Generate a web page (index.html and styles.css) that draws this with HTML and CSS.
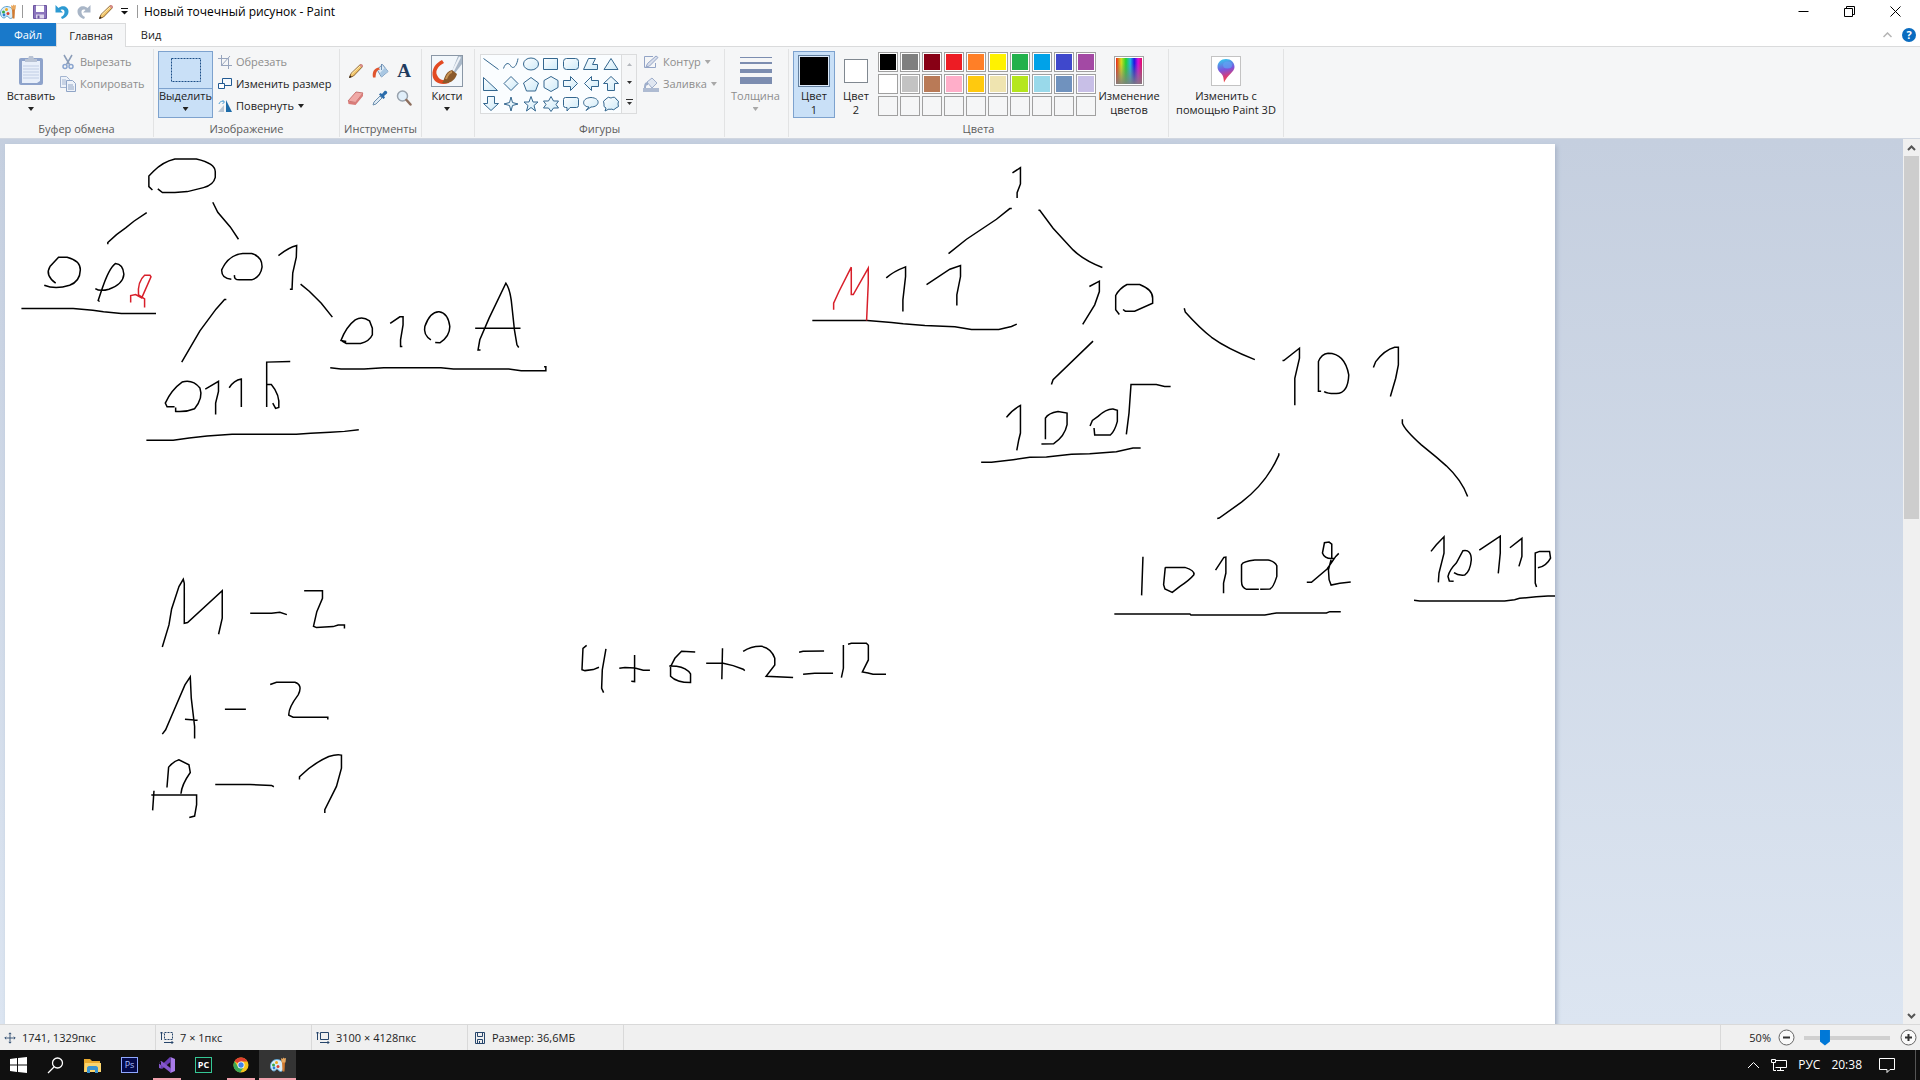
FILE: index.html
```html
<!DOCTYPE html>
<html lang="ru">
<head>
    <meta charset="UTF-8">
    <meta name="viewport" content="width=device-width, initial-scale=1.0">
    <title>Новый точечный рисунок - Paint</title>
    <link rel="stylesheet" href="styles.css">
</head>

<body>
    <svg class="defs" aria-hidden="true">
        <defs>
            <linearGradient id="shapeFill" x1="0" y1="0" x2="1" y2="1">
                <stop offset="0" stop-color="#ffffff"/>
                <stop offset="1" stop-color="#cdeaf8"/>
            </linearGradient>
            <linearGradient id="rainbow">
                <stop offset="0" stop-color="#e8261c"/>
                <stop offset=".2" stop-color="#d8dc20"/>
                <stop offset=".38" stop-color="#25d030"/>
                <stop offset=".55" stop-color="#20b8e0"/>
                <stop offset=".7" stop-color="#1818e0"/>
                <stop offset=".85" stop-color="#d810d8"/>
                <stop offset="1" stop-color="#e01060"/>
            </linearGradient>
            <linearGradient id="fadeGrey" x1="0" y1="0" x2="0" y2="1">
                <stop offset=".2" stop-color="#808080" stop-opacity="0"/>
                <stop offset="1" stop-color="#808080" stop-opacity=".9"/>
            </linearGradient>
            <linearGradient id="drop" x1=".3" y1="0" x2=".5" y2="1">
                <stop offset="0" stop-color="#35c8ee"/>
                <stop offset=".45" stop-color="#7a55dd"/>
                <stop offset=".75" stop-color="#d83c78"/>
                <stop offset="1" stop-color="#f0503c"/>
            </linearGradient>
            <symbol id="palette" viewBox="0 0 16 16">
                <path d="M7 2.500C3 2.500.5 5.500.5 9c0 3 1.500 5 3.500 5 2 0 1.500-2 3-2s1.500 2.500 3.500 2.500 3-2 3-5c0-4-2.500-7-6.500-7z" fill="#d9edf9" stroke="#5fa3cf"/>
                <circle cx="3.500" cy="8" r="1.500" fill="#39a845"/>
                <circle cx="6.500" cy="5.500" r="1.500" fill="#f0a81c"/>
                <circle cx="4" cy="11" r="1.400" fill="#2a7fd4"/>
                <circle cx="8" cy="9.500" r="1.500" fill="#d8432e"/>
                <path d="M12 5h3l-.5 9.500h-2z" fill="#d07a30"/>
                <path d="M11 1l1.500 1L13.500.5l1 1L16 1l-.5 4.500h-4z" fill="#e8a860"/>
            </symbol>
            <symbol id="pencil" viewBox="0 0 16 16">
                <path d="M1.500 14.500L3 10.500 12 1.800c1-.8 3 1 2.200 2.200L5.500 13z" fill="#f3c66b" stroke="#8a6230"/>
                <path d="M3.500 11l9-8.500" stroke="#fff0b8"/>
                <path d="M1 15l1-2.800 1.800 1.700z" fill="#33261c"/>
                <path d="M11.500 2.400L12.600 1.200c1-.6 2.800 1 2.200 2.200l-1.200 1.200z" fill="#d98d8d"/>
            </symbol>
            <symbol id="bucket" viewBox="0 0 17 17">
                <path d="M5 6.500L10.500 1.500 16 8.500 9.500 14z" fill="#dceaf5" stroke="#6d8fb3"/>
                <path d="M8 10l5-5.500 3 4L9.500 14z" fill="#a9c7e2"/>
                <path d="M9.500 1v6" stroke="#6d8fb3" fill="none"/>
                <path d="M1 14.500C0 9 2 5.500 6.500 4.500L8 6.500C4.500 7 4 10 3.500 14.500z" fill="#e0552f"/>
            </symbol>
        </defs>
    </svg>

    <header class="titlebar">
        <svg class="app-icon" width="16" height="16"><use href="#palette"/></svg>
        <span class="bar"></span>
        <button class="quick" aria-label="Сохранить">
            <svg width="16" height="16" viewBox="0 0 16 16"><path d="M1.500 1.500h13v13h-13z" fill="#8b75bd" stroke="#6c549f"/><path d="M4 1.500h8V8H4z" fill="#fff"/><path d="M4 10.500h8v4H4z" fill="#dcd6ec"/><path d="M5.500 11.500h2v3h-2z" fill="#6c549f"/></svg>
        </button>
        <button class="quick" aria-label="Отменить">
            <svg width="16" height="16" viewBox="0 0 16 16"><path d="M1.500 1v7.500H9L6.500 6C9 5 10.800 6 10.500 8.500 10.300 10.500 9 12 7 13l1 2c4-1.500 6.500-4 6.500-7.500 0-5-6-7-10-3.500z" fill="#2d9ad2"/></svg>
        </button>
        <button class="quick" aria-label="Повторить">
            <svg width="16" height="16" viewBox="0 0 16 16"><path d="M14.500 1v7.500H7L9.500 6C7 5 5.200 6 5.500 8.500 5.700 10.500 7 12 9 13l-1 2C4 13.500 1.500 11 1.500 7.500c0-5 6-7 10-3.500z" fill="#a9b6c7"/></svg>
        </button>
        <button class="quick" aria-label="Карандаш">
            <svg width="16" height="16"><use href="#pencil"/></svg>
        </button>
        <button class="quick more" aria-label="Настройка панели быстрого доступа">
            <svg width="7" height="7" viewBox="0 0 7 7"><path d="M0 .5h7" stroke="#111"/><path d="M0 3h7L3.500 6.500z" fill="#111"/></svg>
        </button>
        <span class="bar"></span>
        <h1 class="title">Новый точечный рисунок - Paint</h1>
        <div class="window-buttons">
            <button aria-label="Свернуть"><svg width="11" height="11" viewBox="0 0 11 11"><path d="M.5 5.500h10"/></svg></button>
            <button aria-label="Свернуть в окно"><svg width="11" height="11" viewBox="0 0 11 11"><path d="M.5 2.500h8v8h-8zM2.500 2.500v-2h8v8h-2"/></svg></button>
            <button aria-label="Закрыть"><svg width="11" height="11" viewBox="0 0 11 11"><path d="M.5.5l10 10M10.500.5l-10 10"/></svg></button>
        </div>
    </header>

    <nav class="tabs">
        <button class="tab file">Файл</button>
        <button class="tab current">Главная</button>
        <button class="tab">Вид</button>
        <button class="collapse" aria-label="Свернуть ленту"><svg width="9" height="6" viewBox="0 0 9 6"><path d="M.5 5l4-4 4 4" fill="none" stroke="#b4b4b4" stroke-width="1.500"/></svg></button>
        <button class="help" aria-label="Справка">?</button>
    </nav>

    <section class="ribbon">
        <div class="group clipboard">
            <div class="tools">
                <button class="big paste">
                    <span class="pic"><svg width="26" height="30" viewBox="0 0 26 30"><rect x="1" y="2" width="24" height="27" rx="2" fill="#8ea3cb"/><path d="M4 5h18v20l-3 2H4z" fill="#e8effa"/><path d="M5 10h16M5 13h16M5 16h16M5 19h16M5 22h16" stroke="#c0cde4"/><path d="M7 3h3l1-3h4l1 3h3v3H7z" fill="#b9c3d4"/></svg></span>
                    Вставить<i class="arrow"></i>
                </button>
                <div class="rows">
                    <button class="row off"><svg width="16" height="16" viewBox="0 0 16 16"><path d="M4 1l5.500 9.500M12 1L6.500 10.500" stroke="#8b9db8" stroke-width="1.500"/><circle cx="5" cy="12.500" r="2" fill="none" stroke="#8aa5cf" stroke-width="1.500"/><circle cx="11" cy="12.500" r="2" fill="none" stroke="#8aa5cf" stroke-width="1.500"/></svg>Вырезать</button>
                    <button class="row off"><svg width="16" height="16" viewBox="0 0 16 16"><path d="M.5.500h6l3 3v8h-9z" fill="#edf2f9" stroke="#a3b4d0"/><path d="M2 4h4M2 6h5M2 8h5" stroke="#a3b4d0"/><path d="M6.500 4.500h6l3 3v8h-9z" fill="#edf2f9" stroke="#8fa4c6"/><path d="M8 9h5M8 11h6M8 13h6" stroke="#8fa4c6"/></svg>Копировать</button>
                </div>
            </div>
            <h2>Буфер обмена</h2>
        </div>

        <div class="group image">
            <div class="tools">
                <button class="big select on">
                    <span class="pic"><svg width="32" height="26" viewBox="0 0 32 26"><rect x="1.500" y="1.500" width="29" height="23" fill="none" stroke="#1c4f87" stroke-dasharray="2 1"/></svg></span>
                    Выделить<i class="arrow"></i>
                </button>
                <div class="rows">
                    <button class="row off"><svg width="14" height="14" viewBox="0 0 14 14"><path d="M3.500 0v10.500H14M0 3.500h10.500V14M3 11l9-10" fill="none" stroke="#98a5bd"/></svg>Обрезать</button>
                    <button class="row"><svg width="14" height="14" viewBox="0 0 14 14"><path d="M4.500 1.500h9v7h-9z" fill="#f5f9fd" stroke="#225a92"/><path d="M.5 6.500h6v5h-6z" fill="#fff" stroke="#225a92"/></svg>Изменить размер</button>
                    <button class="row"><svg width="14" height="14" viewBox="0 0 14 14"><path d="M0 13L6 6v7z" fill="#b9c6d4"/><path d="M8 1l6 12H8z" fill="#1e6ca9"/><path d="M1 5c1-3 3-3 5-2M4.500 1L6.500 3l-2 2" fill="none" stroke="#4d9ed4"/></svg>Повернуть<i class="arrow"></i></button>
                </div>
            </div>
            <h2>Изображение</h2>
        </div>

        <div class="group instruments">
            <div class="tools tool-grid">
                <button aria-label="Карандаш"><svg width="16" height="16"><use href="#pencil"/></svg></button>
                <button aria-label="Заливка цветом"><svg width="17" height="17"><use href="#bucket"/></svg></button>
                <button class="letter">A</button>
                <button aria-label="Ластик"><svg width="18" height="16" viewBox="0 0 18 16"><path d="M1 11L9 2l7 1-7.500 9.500z" fill="#f0a9a6" stroke="#c77573"/><path d="M1 11l7.500 1.500v2.500L1.500 14zM8.500 12.500L16 3v3l-7.500 9z" fill="#d97b78"/></svg></button>
                <button aria-label="Палитра"><svg width="16" height="16" viewBox="0 0 16 16"><path d="M1 15l1-3 6-6 2 2-6 6z" fill="#dfeaf4" stroke="#6c8fae"/><path d="M7 4.500L8.500 3l1.500 1 2.500-3c1.500-1 3.500 1 2.500 2.500l-3 2.500 1 1.500L11.500 9z" fill="#2b6cab"/></svg></button>
                <button aria-label="Масштаб"><svg width="16" height="16" viewBox="0 0 16 16"><circle cx="6.500" cy="6" r="5" fill="#e1effa" stroke="#98a2ad" stroke-width="1.500"/><path d="M10.500 10l4 4.500" stroke="#8d6e5d" stroke-width="2.500" stroke-linecap="round"/></svg></button>
            </div>
            <h2>Инструменты</h2>
        </div>

        <div class="group brushes">
            <div class="tools">
                <button class="big">
                    <span class="pic"><svg width="32" height="32" viewBox="0 0 32 32"><rect x=".5" y=".5" width="31" height="31" fill="#f2f7fb" stroke="#8a97a6"/><path d="M11 5l2 3C7 11 4 16 6 20c2 5 7 6 12 5v3C9 31 2 27 1.500 20 1 13 5 8 11 5z" fill="#e24a22"/><path d="M21 16L27 1h4v8l-7 9z" fill="#a9b8c8"/><path d="M22 16l7-14" stroke="#eef3f8" stroke-width="2"/><path d="M21 15l5 4c-2 6-6 10-15 9 3-3 2-11 10-13z" fill="#8a5a2c"/><path d="M15 24c2-5 4-7 6-7" stroke="#c79455" stroke-width="2" fill="none"/></svg></span>
                    Кисти<i class="arrow"></i>
                </button>
            </div>
        </div>

        <div class="group shapes">
            <div class="tools">
                <div class="gallery">
                    <div class="shape-grid" id="shapeGrid"></div>
                    <div class="gallery-scroll">
                        <button aria-label="Вверх"><svg width="5" height="3"><path d="M0 3h5L2.500 0z" fill="#b4b8bd"/></svg></button>
                        <button aria-label="Вниз"><svg width="5" height="3"><path d="M0 0h5L2.500 3z" fill="#333"/></svg></button>
                        <button aria-label="Дополнительно"><svg width="7" height="6" viewBox="0 0 7 6"><path d="M0 .5h7" stroke="#333"/><path d="M1 3h5L3.500 6z" fill="#333"/></svg></button>
                    </div>
                </div>
                <div class="rows">
                    <button class="row off"><svg width="16" height="14" viewBox="0 0 16 14"><path d="M10 1.500H1.500v11h11V8" fill="none" stroke="#93a4c6"/><path d="M3 12l1.500-3.500L13 1l2 1.500L6.500 11z" fill="#d8deeb" stroke="#93a4c6"/></svg>Контур<i class="arrow"></i></button>
                    <button class="row off"><svg width="16" height="15" viewBox="0 0 16 15"><path d="M4 5l5-4 5 5-5 5z" fill="#dfe6f1" stroke="#9eaecb"/><path d="M1 11c0-4 1-6 4-6v3c-2 0-2 1-2 3z" fill="#9eaecb"/><path d="M0 11h16v4H0z" fill="#aebbd2"/></svg>Заливка<i class="arrow"></i></button>
                </div>
            </div>
            <h2>Фигуры</h2>
        </div>

        <div class="group thickness">
            <div class="tools">
                <button class="big off">
                    <span class="pic"><svg width="32" height="28" viewBox="0 0 32 28"><path d="M0 0h32v1H0zM0 5h32v2H0zM0 12h32v4H0zM0 20h32v7H0z" fill="#7c8db0"/></svg></span>
                    Толщина<i class="arrow"></i>
                </button>
            </div>
        </div>

        <div class="group colors">
            <div class="tools">
                <button class="big color on"><span class="pic"><span class="well first"></span></span>Цвет<br>1</button>
                <button class="big color"><span class="pic"><span class="well"></span></span>Цвет<br>2</button>
                <div class="swatches" id="swatches"></div>
                <button class="big edit-colors">
                    <span class="pic"><svg width="30" height="30" viewBox="0 0 30 30"><rect x=".5" y=".5" width="29" height="29" fill="#fff" stroke="#a5a5a5"/><rect x="2" y="2" width="26" height="26" fill="url(#rainbow)"/><rect x="2" y="2" width="26" height="26" fill="url(#fadeGrey)"/></svg></span>
                    Изменение<br>цветов
                </button>
            </div>
            <h2>Цвета</h2>
        </div>

        <div class="group paint3d">
            <div class="tools">
                <button class="big">
                    <span class="pic"><svg width="30" height="30" viewBox="0 0 30 30"><rect x=".5" y=".5" width="29" height="29" fill="#fff" stroke="#c3c3c3"/><path d="M15 3c5 0 8.500 3.500 8.500 8 0 5-7 8-10.500 15.500-.5-4-.5-6-2-8C9 16 6.500 14.500 6.500 11 6.500 6.500 10 3 15 3z" fill="url(#drop)"/><ellipse cx="16.500" cy="9" rx="4.500" ry="3.500" fill="#5fa4f4" opacity=".7"/></svg></span>
                    Изменить с<br>помощью Paint 3D
                </button>
            </div>
        </div>
    </section>

    <main class="workspace">
        <div class="scroll-area">
            <!-- picture 3100 x 4128 shown at 50% -->
            <svg class="picture" width="1550" height="2064" viewBox="5 144 1550 2064">
                <!-- tree of codes that start with 0 -->
                <g class="ink" transform="translate(0 140) scale(.357 .333)">
                    <path d="M427 150L417 140V108L430 94Q455 66 490 57H550Q603 70 603 95V112Q598 135 570 143L525 155L490 158H455L442 147"/>
                    <path d="M411 218L375 244 352 264Q325 283 302 308V313M596 187L610 217 645 261 668 298"/>
                    <path d="M156 430Q125 405 140 380L164 352H188Q225 362 225 390 224 425 195 436 155 450 124 436"/>
                    <path d="M267 446Q280 456 305 448 345 433 347 403 345 373 323 371 305 385 285 450L275 482 279 485"/>
                    <path d="M60 506H205L260 511 290 516 340 521H437"/>
                    <path d="M648 418Q620 416 621 390 640 345 680 341H705Q735 350 734 382 730 412 705 420H670Q655 420 657 406"/>
                    <path d="M780 347Q810 322 831 317L830 352 820 400 818 448H812"/>
                    <path d="M634 479H629L605 508 560 573 509 667M842 433L867 455 900 490 931 532"/>
                    <path d="M970 605L955 602Q970 560 995 540 1015 528 1035 543L1043 565V585Q1035 605 1010 611H970L957 603"/>
                    <path d="M1093 551L1120 531H1129V555L1122 600V620H1127"/>
                    <path d="M1207 600Q1185 585 1190 560 1205 515 1230 516 1255 520 1260 560 1260 590 1232 609L1219 608"/>
                    <path d="M1346 631H1339L1344 600 1370 535 1417 430Q1430 450 1434 500L1441 570 1448 615 1453 623M1331 565H1458"/>
                    <path d="M925 684L955 688H1020L1075 684H1235L1270 688H1425L1460 693H1529V681H1524"/>
                    <path d="M489 801H468L463 790Q480 750 510 727 540 718 560 745 570 775 545 807 520 818 492 815V803"/>
                    <path d="M575 748L612 725V755L604 790V824M642 744Q655 722 676 718V802"/>
                    <path d="M747 802V667L813 665M747 734H760Q785 765 781 803L772 806 764 790"/>
                    <path d="M410 902H485L530 895 580 889 650 884H830L870 881 925 878 965 875 1005 870"/>
                </g>
                <g class="ink red" transform="translate(0 140) scale(.357 .333)">
                    <path d="M366 488V467L380 464 397 474 423 411 420 406H405Q385 425 388 465L405 477V503"/>
                </g>
                <!-- tree of codes that start with 1 -->
                <g class="ink" transform="translate(800 140) scale(.333)">
                    <path d="M638 99L662 83V132L652 158V174M636 206H630L590 238 500 298 446 341M716 211H720L760 265 820 330Q850 360 908 383"/>
                    <path d="M259 414Q280 395 317 381V410L309 480V515M380 434L450 388 482 377V410L471 465V497"/>
                    <path d="M37 542H202L275 548 310 552 375 557 465 561 515 569H597L635 560 651 553"/>
                    <path d="M869 440L899 424V455L885 495 849 554M959 524L948 510V467Q960 445 982 434H1020Q1060 450 1059 475V490L1005 514H977L970 509"/>
                    <path d="M880 604L760 720 755 734M620 833Q635 812 662 797V880L657 900 651 932"/>
                    <path d="M737 899V835Q745 820 775 815L802 820V855Q795 890 762 912L725 913"/>
                    <path d="M871 859L878 842 895 830Q920 807 940 808L953 812V845Q945 875 932 886H885L883 865"/>
                    <path d="M980 884L988 820 994 734H1070L1095 740H1113"/>
                    <path d="M544 968H575L640 960 690 953 740 952 815 944 870 942 950 936 1000 925H1023"/>
                </g>
                <g class="ink red" transform="translate(800 140) scale(.333)">
                    <path d="M101 510V490L117 455 154 382V464H160L205 385V430L200 542"/>
                </g>
                <g class="ink" transform="translate(1100 280) scale(.333)">
                    <path d="M253 85L256 96Q300 145 335 172 380 205 465 239"/>
                    <path d="M548 242H552L599 205V235L585 295V376M664 334H656V245Q665 222 685 220 735 220 747 285 745 340 710 341 685 342 673 335"/>
                    <path d="M821 263L828 245Q855 210 885 202H896V255L888 295 872 350"/>
                    <path d="M537 520V526Q500 610 425 667L358 715 352 716M908 418V430Q915 450 965 495L1010 532 1040 558Q1085 600 1104 650"/>
                    <path d="M129 831L125 947M196 863H255Q285 872 282 885 270 900 240 920L217 938 195 928 191 915 196 863"/>
                    <path d="M347 871L372 833 378 832V880L371 910V941M477 929H440Q425 925 425 905V855Q430 845 465 841H505Q525 845 531 858V890Q520 925 510 928L481 929"/>
                    <path d="M696 838V793L688 787 674 789 668 820Q675 840 704 836M717 821L708 830 682 868 635 908H621M694 840L686 870 688 900 694 916 720 911 753 907"/>
                    <path d="M43 1003H270L273 1006H495L530 1000H680L690 996H723"/>
                    <path d="M994 815L1010 795 1033 771V820L1018 880 1016 908M1062 905L1049 904 1045 890Q1050 870 1070 850L1090 813Q1115 808 1115 840 1112 875 1095 886 1075 888 1063 879"/>
                    <path d="M1139 811L1202 769V820L1196 881M1231 804L1267 776V830L1258 860"/>
                    <path d="M1311 922L1307 910V820L1320 815H1350L1353 835Q1340 860 1315 864"/>
                    <path d="M943 962L960 964H1215L1245 960 1260 956 1310 951 1345 949H1375"/>
                </g>
                <!-- letter counts -->
                <g class="ink" transform="translate(130 560) scale(.333)">
                    <path d="M97 261L117 195 125 147 147 80 160 58 163 70V190L173 188 277 92V175L266 223M361 160H425L450 157 471 164"/>
                    <path d="M523 92H578V115L561 155 551 199 560 203 610 200 625 195H644V206"/>
                    <path d="M97 523L107 510 127 463 165 375 181 351 184 415 194 500V536M165 478L203 481M285 448H348M421 374L440 367H495Q520 375 505 405 475 445 477 466L490 472H594V479"/>
                    <path d="M111 683L116 622Q130 605 147 600L177 615 181 638Q155 675 153 702M68 752L72 693M64 706H200V735L194 769 178 773"/>
                    <path d="M256 674H360L425 677 432 681M509 659V651Q550 610 597 590 620 583 635 586V625L620 680 585 750V760"/>
                </g>
                <!-- the sum -->
                <g class="ink" transform="translate(560 620) scale(.333)">
                    <path d="M80 76L69 85 66 149 75 152 100 149 117 142M138 87L127 150 125 205 131 218M178 145L195 143 225 144 250 151H270M224 105V185L214 184"/>
                    <path d="M406 96L365 94 345 115 332 140V169Q350 188 392 188V162Q380 143 350 139L328 138M439 130H490L520 137 550 148 555 152M488 85L486 178"/>
                    <path d="M550 94Q575 78 605 79 635 85 645 115V135L619 169 700 173M718 97L730 94 793 93M730 163L765 160H820M851 75V145L845 173M865 73L875 70H920L926 76V120L908 156 925 159 940 163H979"/>
                </g>
            </svg>
        </div>
        <div class="scrollbar">
            <button aria-label="Прокрутить вверх"><svg width="9" height="6" viewBox="0 0 9 6"><path d="M1 5l3.500-3.500L8 5"/></svg></button>
            <div class="thumb"></div>
            <button aria-label="Прокрутить вниз"><svg width="9" height="6" viewBox="0 0 9 6"><path d="M1 1l3.500 3.500L8 1"/></svg></button>
        </div>
    </main>

    <footer class="status">
        <span class="cell"><svg width="12" height="14" viewBox="0 0 14 14"><path d="M7 1v12M1 7h12M5.500 2.500L7 1l1.500 1.500M5.500 11.500L7 13l1.500-1.500M2.500 5.500L1 7l1.500 1.500M11.500 5.500L13 7l-1.500 1.500"/></svg>1741, 1329пкс</span>
        <span class="cell"><svg width="14" height="14" viewBox="0 0 14 14"><path d="M4.500 1.500h8v7h-8z" stroke-dasharray="2 1"/><path d="M1.500 1v8M0 2.500L1.500 1 3 2.500M4 11.500h9M11.500 10l1.500 1.500-1.500 1.500"/></svg>7 × 1пкс</span>
        <span class="cell"><svg width="14" height="14" viewBox="0 0 14 14"><path d="M4.500 1.500h8v7h-8z"/><path d="M1.500 1v8M0 2.500L1.500 1 3 2.500M4 11.500h9M11.500 10l1.500 1.500-1.500 1.500"/></svg>3100 × 4128пкс</span>
        <span class="cell size"><svg width="12" height="12" viewBox="0 0 12 12"><path d="M1.500.5h9v11h-9zM3.500.5v4h5v-4M3.500 11.500v-4h5v4M5.500 9v2"/></svg>Размер: 36,6МБ</span>
        <div class="zoom">
            <label for="zoom">50%</label>
            <button aria-label="Уменьшить"><svg width="17" height="17" viewBox="0 0 17 17"><circle cx="8.500" cy="8.500" r="7.500"/><path d="M5 8.500h7"/></svg></button>
            <input type="range" id="zoom" min="0" max="100" value="21">
            <button aria-label="Увеличить"><svg width="17" height="17" viewBox="0 0 17 17"><circle cx="8.500" cy="8.500" r="7.500"/><path d="M5 8.500h7M8.500 5v7"/></svg></button>
        </div>
    </footer>

    <div class="taskbar">
        <button aria-label="Пуск"><svg width="17" height="16" viewBox="0 0 17 16"><path d="M0 2l7-1v6.500H0zM8 1l9-1v7.500H8zM0 8.500h7V15l-7-1zM8 8.500h9V16l-9-1z" fill="#fff"/></svg></button>
        <button aria-label="Поиск"><svg width="17" height="17" viewBox="0 0 17 17"><circle cx="10.500" cy="6" r="5" fill="none" stroke="#fff" stroke-width="1.300"/><path d="M7 10l-6 6" stroke="#fff" stroke-width="1.300"/></svg></button>
        <button aria-label="Проводник"><svg width="17" height="15" viewBox="0 0 17 15"><path d="M0 1h6l2 2h8v11H0z" fill="#e9aa2e"/><path d="M1 5h16v9H0z" fill="#fbd56d"/><path d="M3 15v-5c0-1 1-2 2-2h7c1 0 2 1 2 2v5h-3v-3H6v3z" fill="#3b94cf"/></svg></button>
        <button class="ps">Ps</button>
        <button class="open" aria-label="Visual Studio"><svg width="16" height="16" viewBox="0 0 16 16"><path d="M11.500 0L16 2v12l-4.500 2z" fill="#a87be8"/><path d="M11.500 0v5L3 12l-3-1.500L11 0z" fill="#6a3eb5"/><path d="M0 5.500L2.500 4 12 11.500V16L0 6.500zM0 5v6l2 .5V5z" fill="#8557cc"/></svg></button>
        <button class="pc">PC</button>
        <button class="open" aria-label="Chrome"><svg width="16" height="16" viewBox="0 0 16 16"><circle cx="8" cy="8" r="7.500" fill="#f5c31d"/><path d="M8 8L1.500 4.200A7.500 7.500 0 0 1 14.500 4.500H8z" fill="#df3f30"/><path d="M1.500 4.200A7.500 7.500 0 0 0 7.200 15.500L11 9.700 5 9.700z" fill="#3ba757"/><circle cx="8" cy="8" r="3.500" fill="#fff"/><circle cx="8" cy="8" r="2.700" fill="#3f81ec"/></svg></button>
        <button class="open active" aria-label="Paint"><svg width="16" height="16"><use href="#palette"/></svg></button>
        <div class="tray">
            <svg width="13" height="8" viewBox="0 0 13 8"><path d="M1 7l5.500-5.500L12 7"/></svg>
            <svg width="16" height="14" viewBox="0 0 16 14"><path d="M4.500 2.500h11v7h-11M9.500 9.500v3M6 12.500h7M.5 1.500h4v3h-4zM2.500 4.500v8H5"/></svg>
            <span>РУС</span>
            <time>20:38</time>
            <svg class="notes" width="16" height="16" viewBox="0 0 16 16"><path d="M.5 1.500h15v11H11l-3 3v-3H.5z"/></svg>
        </div>
    </div>

    <script>
        const colors = [
            '#000000', '#7f7f7f', '#880015', '#ed1c24', '#ff7f27', '#fff200', '#22b14c', '#00a2e8', '#3f48cc', '#a349a4',
            '#ffffff', '#c3c3c3', '#b97a57', '#ffaec9', '#ffc90e', '#efe4b0', '#b5e61d', '#99d9ea', '#7092be', '#c8bfe7'
        ];
        const swatches = document.getElementById('swatches');

        for (let i = 0; i < 30; i++) {
            const swatch = document.createElement('button');
            swatch.className = 'swatch';
            swatch.setAttribute('aria-label', 'Цвет ' + (i + 1));
            if (colors[i]) {
                swatch.innerHTML = `<span style="background: ${colors[i]}"></span>`;
            }
            swatches.appendChild(swatch);
        }

        const shapes = [
            'M2.500 4.500l15 11',
            'M2.500 14.500c2-6 5-6 7-3 2 4 6 2 7.500-7',
            'M2.500 10a7.500 6 0 1 0 15 0a7.500 6 0 1 0-15 0z',
            'M2.500 4.500h14v11h-14z',
            'M5.500 4.500h9q3 0 3 3v5q0 3-3 3h-9q-3 0-3-3v-5q0-3 3-3z',
            'M2.500 15.500l5-11h7l-3 6h5v5z',
            'M10 4.500l7 11H3z',
            'M2.500 3.500l14 13h-14z',
            'M10 2.500l7 7-7 7-7-7z',
            'M10 3.500l7.500 5.500-3 8h-9l-3-8z',
            'M10 2.500l7 4v7l-7 4-7-4v-7z',
            'M2.500 6.500h7v-4l7 7-7 7v-4h-7z',
            'M17.500 6.500h-7v-4l-7 7 7 7v-4h7z',
            'M6.500 16.500v-7h-4l7.500-7 7.500 7h-4v7z',
            'M6.500 2.500v7h-4l7.500 7 7.500-7h-4v-7z',
            'M10 3l1.500 5.500L17 10l-5.500 1.500L10 17l-1.500-5.500L3 10l5.500-1.500z',
            'M10 2.500l2 5.500h5l-4 3.500 1.500 5.500-4.500-3.500L5.500 17 7 11.500 3 8h5z',
            'M10 2.500l2.500 4.500h5L15 10.500l2.500 3.500h-5L10 17.500 7.500 14h-5L5 10.500 2.500 7h5z',
            'M4.500 3.500h11q2 0 2 2v6q0 2-2 2H9l-3 3.500v-3.500H4.500q-2 0-2-2v-6q0-2 2-2z',
            'M8 13c-7 0-8-9 2-9.500 10 .5 9 9.500 0 9.500L5 16.500z',
            'M5 5q2-3 5-1 4-2 5 1 4 2 2 5 2 3-2 4-2 3-5 1-1 1-2 0l-4 2 1-3q-3-1-2-4-2-3 2-5z'
        ];
        document.getElementById('shapeGrid').innerHTML = shapes.map((d, i) =>
            `<button aria-label="Фигура ${i + 1}"><svg width="20" height="20" viewBox="0 0 20 20"><path d="${d}" fill="${i < 2 ? 'none' : 'url(#shapeFill)'}"/></svg></button>`
        ).join('');
    </script>
</body>
</html>
```

FILE: styles.css
```css
* {
    box-sizing: border-box;
}

body {
    margin: 0;
    height: 100vh;
    display: flex;
    flex-direction: column;
    overflow: hidden;
    font-family: "Open Sans", "Noto Sans", sans-serif;
    font-size: 11px;
    line-height: 16px;
    color: #222;
    background: white;
}

button {
    margin: 0;
    padding: 0;
    border: 0;
    background: none;
    font: inherit;
    color: inherit;
}

svg {
    display: block;
    flex: none;
}

.defs {
    position: absolute;
    width: 0;
    height: 0;
}

/* title bar */
.titlebar {
    display: flex;
    align-items: center;
    height: 23px;
    flex: none;
}

.bar {
    width: 1px;
    height: 13px;
    margin: 0 6px;
    background: #999;
}

.quick {
    display: flex;
    justify-content: center;
    width: 22px;
}

.more {
    width: 14px;
}

.title {
    margin: 0;
    font-size: 12px;
    font-weight: normal;
    color: black;
}

.window-buttons {
    display: flex;
    margin-left: auto;
}

.window-buttons button {
    display: flex;
    justify-content: center;
    width: 46px;
}

.window-buttons path {
    fill: none;
    stroke: black;
}

.window-buttons {
    padding-right: 2px;
}

/* tabs */
.tabs {
    display: flex;
    align-items: stretch;
    height: 24px;
    flex: none;
    border-bottom: 1px solid #dadbdc;
}

.tab {
    width: 50px;
}

.file {
    width: 56px;
    background: #1979ca;
    color: white;
}

.current {
    width: 70px;
    margin-bottom: -1px;
    border: 1px solid #dadbdc;
    border-bottom: 0;
    background: #f5f6f7;
}

.collapse {
    display: flex;
    align-items: center;
    justify-content: center;
    margin-left: auto;
    width: 22px;
}

.help {
    align-self: center;
    width: 14px;
    height: 14px;
    margin: 0 4px;
    border-radius: 7px;
    background: #0a6cc0;
    color: white;
    font-weight: bold;
    line-height: 14px;
}

/* ribbon */
.ribbon {
    display: flex;
    height: 91px;
    flex: none;
    padding-top: 2px;
    background: #f5f6f7;
}

.group {
    display: flex;
    flex-direction: column;
    justify-content: space-between;
    height: 88px;
    border-right: 1px solid #e2e3e4;
}

.group h2 {
    margin: 0;
    font-size: 11px;
    font-weight: normal;
    text-align: center;
    color: #5c5c5c;
}

.tools {
    display: flex;
    height: 69px;
    padding: 2px 4px 0;
}

.clipboard { width: 154px; }
.image { width: 186px; }
.instruments { width: 82px; }
.brushes { width: 53px; }
.shapes { width: 250px; }
.thickness { width: 64px; }
.colors { width: 380px; }
.paint3d { width: 115px; }

.clipboard .tools,
.paint3d .tools {
    padding-left: 0;
    padding-right: 0;
}

.brushes .tools,
.thickness .tools {
    padding-left: 0;
    padding-right: 2px;
}

.big {
    display: flex;
    flex-direction: column;
    align-items: center;
    width: 100%;
    height: 67px;
    border: 1px solid transparent;
    line-height: 14px;
    white-space: nowrap;
}

.pic {
    display: flex;
    align-items: center;
    justify-content: center;
    width: 100%;
    height: 37px;
}

.arrow {
    flex: none;
    width: 6px;
    height: 4px;
    background: #222;
    clip-path: polygon(0 0, 100% 0, 50% 100%);
}

.big .arrow {
    margin-top: 4px;
}

.off {
    color: #8d8d8d;
}

.off .arrow {
    background: #a8a8a8;
}

.on {
    border-color: #7da2ce;
    background: #c9e0f7;
}

.paste {
    width: 62px;
}

.select {
    width: 55px;
}

.select .pic {
    border-bottom: 1px solid #7da2ce;
}

.rows {
    display: flex;
    flex-direction: column;
}

.row {
    display: flex;
    align-items: center;
    gap: 4px;
    height: 22px;
    white-space: nowrap;
}

.image .row {
    padding-left: 5px;
}

.shapes .row {
    padding-left: 6px;
}

.clipboard .row svg {
    margin-left: -2px;
}

.tool-grid {
    display: grid;
    grid-template-columns: 24px 24px 24px;
    grid-template-rows: 27px 27px;
    align-content: center;
}

.tool-grid button {
    display: flex;
    align-items: center;
    justify-content: center;
}

.letter {
    font-family: "Liberation Serif", serif;
    font-size: 19px;
    font-weight: bold;
    color: #1f3b5e;
}

.gallery {
    display: flex;
    width: 157px;
    height: 60px;
    margin: 3px 0 0 1px;
    border: 1px solid #dbdcdd;
    background: #fafdff;
}

.shape-grid {
    display: grid;
    grid-template-columns: repeat(7, 20px);
    grid-template-rows: repeat(3, 20px);
    margin-top: -1px;
}

.shape-grid path {
    stroke: #34678f;
}

.gallery-scroll {
    display: grid;
    width: 15px;
    margin-left: auto;
    border-left: 1px solid #dbdcdd;
    background: #f5f6f7;
}

.gallery-scroll button {
    display: flex;
    align-items: center;
    justify-content: center;
}

.color {
    width: 42px;
}

.well {
    width: 24px;
    height: 24px;
    border: 1px solid #808890;
    background: white;
}

.first {
    width: 32px;
    height: 32px;
    border: 1px solid #63809f;
    background: black;
    box-shadow: inset 0 0 0 1px #dceafa;
}

.swatches {
    display: grid;
    grid-template-columns: repeat(10, 20px);
    grid-auto-rows: 20px;
    gap: 2px;
    margin: 1px 0 0 1px;
}

.swatch {
    display: grid;
    padding: 0;
    border: 1px solid #a0a0a0;
}

.swatch span {
    border: 1px solid white;
}

.edit-colors {
    width: 66px;
}

/* workspace */
.workspace {
    display: flex;
    flex: 1;
    min-height: 0;
    border-top: 1px solid #d0d6e0;
    background: linear-gradient(#c5cfdf, #dce5f1);
}

.scroll-area {
    flex: 1;
    min-width: 0;
    overflow: hidden;
    padding: 5px 0 0 5px;
}

.picture {
    background: white;
    box-shadow: 2px 2px 4px #a9b5c8;
}

.ink path {
    fill: none;
    stroke: black;
    stroke-width: 1.5px;
    vector-effect: non-scaling-stroke;
}

.red path {
    stroke: #d81f2a;
}

.scrollbar {
    display: flex;
    flex-direction: column;
    width: 17px;
    background: #f0f0f0;
}

.scrollbar button {
    display: flex;
    align-items: center;
    justify-content: center;
    height: 17px;
}

.scrollbar button:last-child {
    margin-top: auto;
}

.scrollbar path {
    fill: none;
    stroke: #555;
    stroke-width: 2px;
}

.thumb {
    height: 41%;
    margin: 0 1px;
    background: #cdcdcd;
}

/* status bar */
.status {
    display: flex;
    height: 26px;
    flex: none;
    border-top: 1px solid #d9d9d9;
    background: #f0f0f0;
}

.cell {
    display: flex;
    align-items: center;
    gap: 6px;
    width: 156px;
    padding-left: 4px;
    border-right: 1px solid #d9d9d9;
}

.size {
    padding-left: 6px;
}

.cell path {
    fill: none;
    stroke: #26456b;
}

.zoom {
    display: flex;
    align-items: center;
    margin-left: auto;
    padding: 0 3px 0 28px;
    border-left: 1px solid #d9d9d9;
}

.zoom button {
    margin: 0 0 0 7px;
}

.zoom svg {
    fill: #fafafa;
    stroke: #666;
}

.zoom path {
    stroke: #333;
    stroke-width: 2px;
}

#zoom {
    appearance: none;
    width: 86px;
    height: 18px;
    margin: 0 3px 0 9px;
    background: linear-gradient(#d0d0d0, #d0d0d0) center / 100% 4px no-repeat;
}

#zoom::-webkit-slider-thumb {
    appearance: none;
    width: 10px;
    height: 16px;
    background: #0078d7;
    clip-path: polygon(0 0, 100% 0, 100% 75%, 50% 100%, 0 75%);
}

/* taskbar */
.taskbar {
    display: flex;
    height: 30px;
    flex: none;
    background: #101010;
    color: white;
    font-size: 12px;
}

.taskbar button {
    display: flex;
    align-items: center;
    justify-content: center;
    width: 37px;
}

.open {
    background: linear-gradient(#f0a0ac, #f0a0ac) bottom / 28px 2px no-repeat;
}

.taskbar .active {
    background: linear-gradient(#f0a0ac, #f0a0ac) bottom / 100% 2px no-repeat #343434;
}

.taskbar .ps,
.taskbar .pc {
    width: 17px;
    height: 16px;
    margin: 7px 10px;
    border: 1px solid #8fa8ff;
    background: #040a4a;
    color: #a9c0ff;
    font-size: 9px;
    line-height: 12px;
}

.taskbar .pc {
    border-color: #35c795;
    background: #111;
    color: white;
    font-weight: bold;
}

.tray {
    display: flex;
    align-items: center;
    gap: 11px;
    margin: 0 4px 0 auto;
    padding-right: 20px;
    border-right: 1px solid #555;
}

.tray svg {
    fill: none;
    stroke: white;
}

.notes {
    margin-left: 6px;
}
```
